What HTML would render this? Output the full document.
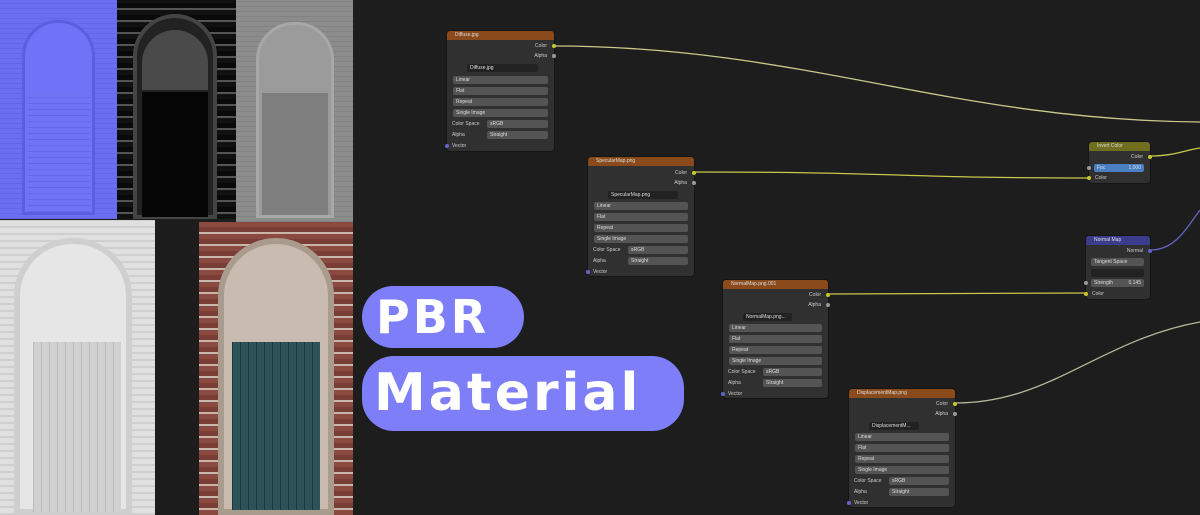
<!DOCTYPE html>
<html><head><meta charset="utf-8"><style>
*{margin:0;padding:0;box-sizing:border-box}
body{width:1200px;height:515px;background:#1d1d1d;position:relative;overflow:hidden;font-family:"Liberation Sans",sans-serif}
.a{position:absolute}
.pill{position:absolute;background:#7e7ff8;border-radius:32px;color:#fff;font-weight:bold;font-family:"DejaVu Sans","Liberation Sans",sans-serif}
.node{position:absolute;background:#303030;border:1px solid #151515;border-radius:4px;font-size:5px;color:#ccc;overflow:visible}
.node .h{height:9px;background:#8a4a1c;border-radius:3px 3px 0 0;padding-left:8px;line-height:9px;color:#ddd}
.row{position:absolute;left:6px;right:6px;height:8px;background:#545454;border-radius:2px;line-height:8px;padding-left:3px;color:#ddd}
.lab{position:absolute;font-size:5px;color:#ccc}
.dot{position:absolute;width:4px;height:4px;border-radius:2px}
</style></head><body>
<!-- textures -->
<div class="a" style="left:0;top:0;width:117px;height:219px;background:repeating-linear-gradient(0deg,#6466ea 0 1px,#6c6ef2 1px 5px),#6a6cf0"></div>
<div class="a" style="left:22px;top:20px;width:73px;height:195px;border-radius:36px 36px 0 0;border:3px solid #5c5ee0;background:#7072f7"></div>
<div class="a" style="left:28px;top:92px;width:62px;height:120px;background:repeating-linear-gradient(0deg,#6264ea 0 1px,#7274f5 1px 6px),#7274f5;opacity:.8"></div>
<div class="a" style="left:117px;top:0;width:119px;height:219px;background:repeating-linear-gradient(0deg,#111 0 5px,#555 5px 7px,#0a0a0a 7px 12px)"></div>
<div class="a" style="left:133px;top:14px;width:84px;height:205px;border-radius:42px 42px 0 0;background:#222;border:4px solid #444"></div>
<div class="a" style="left:142px;top:30px;width:66px;height:60px;border-radius:33px 33px 0 0;background:#4a4a4a"></div>
<div class="a" style="left:142px;top:92px;width:66px;height:125px;background:#050505"></div>
<div class="a" style="left:236px;top:0;width:117px;height:222px;background:repeating-linear-gradient(0deg,#828282 0 1px,#8c8c8c 1px 5px)"></div>
<div class="a" style="left:256px;top:22px;width:78px;height:196px;border-radius:38px 38px 0 0;background:#9b9b9b;border:3px solid #a8a8a8"></div>
<div class="a" style="left:262px;top:93px;width:66px;height:122px;background:#7e7e7e"></div>
<div class="a" style="left:0;top:220px;width:155px;height:295px;background:repeating-linear-gradient(0deg,#cfcfcf 0 2px,#e0e0e0 2px 7px)"></div>
<div class="a" style="left:14px;top:238px;width:118px;height:277px;border-radius:58px 58px 0 0;background:#e6e6e6;border:6px solid #cfcfcf"></div>
<div class="a" style="left:33px;top:342px;width:88px;height:170px;background:repeating-linear-gradient(90deg,#bcbcbc 0 1px,#d0d0d0 1px 8px),#d0d0d0"></div>
<div class="a" style="left:155px;top:220px;width:44px;height:295px;background:#1c1c1c"></div>
<div class="a" style="left:199px;top:222px;width:154px;height:293px;background:repeating-linear-gradient(0deg,#8a4a40 0 5px,#c9b6a8 5px 7px,#7a3d35 7px 12px)"></div>
<div class="a" style="left:218px;top:238px;width:116px;height:277px;border-radius:58px 58px 0 0;background:#c9bbb0;border:6px solid #a99c8f"></div>
<div class="a" style="left:232px;top:342px;width:88px;height:168px;background:repeating-linear-gradient(90deg,#1c3a3e 0 1px,#2d5257 1px 8px),#2d5257"></div>
<!-- labels -->
<div class="pill" style="left:362px;top:286px;width:162px;height:62px;font-size:46px;line-height:62px;padding-left:14px;letter-spacing:3px">PBR</div>
<div class="pill" style="left:362px;top:356px;width:322px;height:75px;font-size:52px;line-height:75px;padding-left:12px;letter-spacing:3px">Material</div>
<!-- wires -->
<svg class="a" style="left:0;top:0" width="1200" height="515">
<g fill="none" stroke-width="1.3">
<path d="M554 46 C800 46 950 120 1200 122" stroke="#c9c98a"/>
<path d="M694 172 C900 172 900 178 1090 178" stroke="#c8c84a"/>
<path d="M1150 156 C1175 156 1185 150 1200 148" stroke="#c8c84a"/>
<path d="M828 294 C950 294 970 293 1086 293" stroke="#c8c84a"/>
<path d="M1150 250 C1175 250 1185 230 1200 210" stroke="#6464c8"/>
<path d="M956 403 C1050 403 1100 340 1200 322" stroke="#b8b89a"/>
</g></svg>

<!-- Diffuse -->
<div class="node" style="left:446px;top:30px;width:109px;height:122px">
<div class="h">Diffuse.jpg</div>
<div class="lab" style="right:7px;top:12px">Color</div><div class="dot" style="right:-2px;top:13px;background:#c7c729"></div>
<div class="lab" style="right:7px;top:22px">Alpha</div><div class="dot" style="right:-2px;top:23px;background:#999"></div>
<div class="row" style="top:33px;left:20px;right:16px;background:#222">Diffuse.jpg</div>
<div class="row" style="top:45px">Linear</div><div class="row" style="top:56px">Flat</div>
<div class="row" style="top:67px">Repeat</div><div class="row" style="top:78px">Single Image</div>
<div class="lab" style="left:5px;top:90px">Color Space</div><div class="row" style="top:89px;left:40px">sRGB</div>
<div class="lab" style="left:5px;top:101px">Alpha</div><div class="row" style="top:100px;left:40px">Straight</div>
<div class="lab" style="left:5px;top:112px">Vector</div><div class="dot" style="left:-2px;top:113px;background:#6363c7"></div>
</div>
<!-- Specular -->
<div class="node" style="left:587px;top:156px;width:108px;height:121px">
<div class="h">SpecularMap.png</div>
<div class="lab" style="right:7px;top:13px">Color</div><div class="dot" style="right:-2px;top:14px;background:#c7c729"></div>
<div class="lab" style="right:7px;top:23px">Alpha</div><div class="dot" style="right:-2px;top:24px;background:#999"></div>
<div class="row" style="top:34px;left:20px;right:16px;background:#222">SpecularMap.png</div>
<div class="row" style="top:45px">Linear</div><div class="row" style="top:56px">Flat</div>
<div class="row" style="top:67px">Repeat</div><div class="row" style="top:78px">Single Image</div>
<div class="lab" style="left:5px;top:90px">Color Space</div><div class="row" style="top:89px;left:40px">sRGB</div>
<div class="lab" style="left:5px;top:101px">Alpha</div><div class="row" style="top:100px;left:40px">Straight</div>
<div class="lab" style="left:5px;top:112px">Vector</div><div class="dot" style="left:-2px;top:113px;background:#6363c7"></div>
</div>
<!-- Normal png -->
<div class="node" style="left:722px;top:279px;width:107px;height:120px">
<div class="h">NormalMap.png.001</div>
<div class="lab" style="right:7px;top:12px">Color</div><div class="dot" style="right:-2px;top:13px;background:#c7c729"></div>
<div class="lab" style="right:7px;top:22px">Alpha</div><div class="dot" style="right:-2px;top:23px;background:#999"></div>
<div class="row" style="top:33px;left:20px;right:36px;background:#222">NormalMap.png...</div>
<div class="row" style="top:44px">Linear</div><div class="row" style="top:55px">Flat</div>
<div class="row" style="top:66px">Repeat</div><div class="row" style="top:77px">Single Image</div>
<div class="lab" style="left:5px;top:89px">Color Space</div><div class="row" style="top:88px;left:40px">sRGB</div>
<div class="lab" style="left:5px;top:100px">Alpha</div><div class="row" style="top:99px;left:40px">Straight</div>
<div class="lab" style="left:5px;top:111px">Vector</div><div class="dot" style="left:-2px;top:112px;background:#6363c7"></div>
</div>
<!-- Displacement -->
<div class="node" style="left:848px;top:388px;width:108px;height:120px">
<div class="h">DisplacementMap.png</div>
<div class="lab" style="right:7px;top:12px">Color</div><div class="dot" style="right:-2px;top:13px;background:#c7c729"></div>
<div class="lab" style="right:7px;top:22px">Alpha</div><div class="dot" style="right:-2px;top:23px;background:#999"></div>
<div class="row" style="top:33px;left:20px;right:36px;background:#222">DisplacementM...</div>
<div class="row" style="top:44px">Linear</div><div class="row" style="top:55px">Flat</div>
<div class="row" style="top:66px">Repeat</div><div class="row" style="top:77px">Single Image</div>
<div class="lab" style="left:5px;top:89px">Color Space</div><div class="row" style="top:88px;left:40px">sRGB</div>
<div class="lab" style="left:5px;top:100px">Alpha</div><div class="row" style="top:99px;left:40px">Straight</div>
<div class="lab" style="left:5px;top:111px">Vector</div><div class="dot" style="left:-2px;top:112px;background:#6363c7"></div>
</div>
<!-- Invert -->
<div class="node" style="left:1088px;top:141px;width:63px;height:43px">
<div class="h" style="background:#6e6e1e">Invert Color</div>
<div class="lab" style="right:7px;top:12px">Color</div><div class="dot" style="right:-2px;top:13px;background:#c7c729"></div>
<div class="row" style="top:22px;left:5px;background:#4a7fc4">Fac<span style="float:right;padding-right:3px">1.000</span></div>
<div class="dot" style="left:-2px;top:24px;background:#999"></div>
<div class="lab" style="left:6px;top:33px">Color</div><div class="dot" style="left:-2px;top:34px;background:#c7c729"></div>
</div>
<!-- Normal Map -->
<div class="node" style="left:1085px;top:235px;width:66px;height:65px">
<div class="h" style="background:#3c3c8c">Normal Map</div>
<div class="lab" style="right:7px;top:12px">Normal</div><div class="dot" style="right:-2px;top:13px;background:#6363c7"></div>
<div class="row" style="top:22px;left:5px">Tangent Space</div>
<div class="row" style="top:33px;left:5px;background:#222"></div>
<div class="row" style="top:43px;left:5px">Strength<span style="float:right;padding-right:3px">0.145</span></div>
<div class="dot" style="left:-2px;top:45px;background:#999"></div>
<div class="lab" style="left:6px;top:55px">Color</div><div class="dot" style="left:-2px;top:56px;background:#c7c729"></div>
</div>
</body></html>
